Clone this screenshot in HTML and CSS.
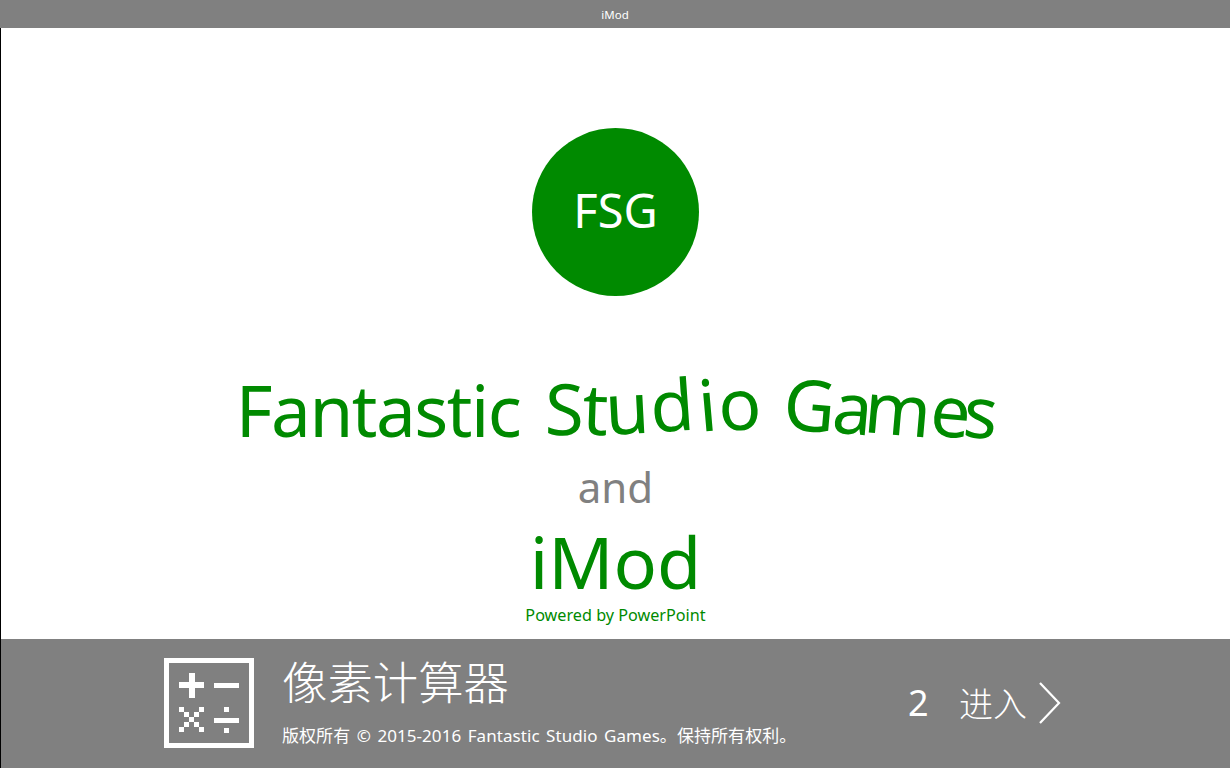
FILE: index.html
```html
<!DOCTYPE html>
<html lang="zh-CN">
<head>
<meta charset="utf-8">
<title>iMod</title>
<link rel="stylesheet" href="styles.css">
</head>
<body>
<div class="app">
  <header class="titlebar">iMod</header>
  <main class="splash">
    <div class="logo">FSG</div>
    <h1 class="studio"><span>Fantastic</span> <span class="wobble"><i class="s">S</i><i class="t">t</i><i class="u">u</i><i class="d">d</i><i class="i">i</i><i class="o">o</i></span> <span class="wobble games"><i class="g">G</i><i class="a">a</i><i class="m">m</i><i class="e">e</i><i class="z">s</i></span></h1>
    <div class="and">and</div>
    <div class="imod">iMod</div>
    <div class="powered">Powered by PowerPoint</div>
  </main>
  <footer class="tile">
    <svg class="calc" width="90" height="90" viewBox="0 0 90 90">
      <rect x="2.5" y="2.5" width="85" height="85" fill="none" stroke="#fff" stroke-width="5"/>
      <path fill="#fff" d="M15 24h10v-9h6v9h9v6h-9v10h-6v-10h-10z"/>
      <rect x="50" y="25" width="25" height="5" fill="#fff"/>
      <path fill="#fff" d="M15 49h5v5h-5zM35 49h5v5h-5zM20 54h5v5h-5zM30 54h5v5h-5zM25 59h5v5h-5zM20 64h5v5h-5zM30 64h5v5h-5zM15 69h5v5h-5zM35 69h5v5h-5z"/>
      <path fill="#fff" d="M60 49h5v5h-5zM50 60h25v5h-25zM60 70h5v5h-5z"/>
    </svg>
    <div class="info">
      <div class="name">像素计算器</div>
      <div class="copy">版权所有 © 2015-2016 Fantastic Studio Games。保持所有权利。</div>
    </div>
    <div class="enter">
      <span class="count">2</span>
      <span class="go">进入</span>
      <svg class="chev" width="22" height="42" viewBox="0 0 22 42"><path d="M1 1l19 20L1 41" fill="none" stroke="#fff" stroke-width="2.2"/></svg>
    </div>
  </footer>
</div>
</body>
</html>
```
FILE: styles.css
```css
* { box-sizing: border-box; }
html, body { margin: 0; padding: 0; height: 100%; background: #fff; overflow: hidden; }
body { font-family: "Noto Sans", "Open Sans", "Noto Sans CJK SC", sans-serif; }
.app { width: 1230px; height: 768px; display: flex; flex-direction: column; border-left: 1px solid #000; background: #fff; }
.titlebar { height: 28px; flex: none; background: #808080; color: #fff; font-size: 11.5px; line-height: 30px; text-align: center; margin-left: -1px; }
.splash { flex: 1; display: flex; flex-direction: column; align-items: center; padding-top: 100px; color: #008a00; min-height: 0; }
.logo { width: 167px; height: 168px; flex: none; border-radius: 50%; background: #008a00; color: #fff; font-size: 47px; line-height: 164px; text-align: center; }
.studio { margin: 68px 12px 0 0; font-weight: 400; font-size: 71px; letter-spacing: -1.5px; line-height: 92px; white-space: nowrap; height: 92px; }
.wobble i { display: inline-block; font-style: normal; }
.s { transform: translate(8px, -2px) rotate(1deg); }
.t { transform: translate(7.6px, -2px) rotate(2deg); }
.u { transform: translate(6px, -3px) rotate(-3deg); }
.d { transform: translate(9px, -6px) rotate(-4deg); }
.i { transform: translate(15px, -6px) rotate(-5deg); }
.o { transform: translate(18px, -7px) rotate(-3deg); }
.g { transform: translate(25px, -6px) rotate(5deg); }
.a { transform: translate(24px, -3px) rotate(5deg); }
.m { transform: translate(18px, -2px) rotate(5deg); }
.e { transform: translate(19px, 0) rotate(5deg); }
.z { transform: translate(13px, 1px) rotate(5deg); }
.and { color: #808080; font-size: 42px; line-height: 52px; margin-top: 5px; }
.imod { font-size: 72px; line-height: 72px; margin-top: 12px; }
.powered { font-size: 16.2px; line-height: 22px; margin-top: 7px; }
.tile { height: 129px; flex: none; background: #808080; color: #fff; display: flex; align-items: flex-start; padding: 19px 0 0 163px; }
.calc { flex: none; display: block; }
.info { width: 620px; margin-left: 28px; }
.name { font-family: "Noto Sans CJK SC", sans-serif; font-weight: 300; font-size: 45.4px; line-height: 50px; margin-top: -3px; }
.copy { font-size: 17px; word-spacing: 2px; letter-spacing: 0.06px; line-height: 22px; margin-top: 20px; white-space: nowrap; }
.enter { display: flex; align-items: center; height: 90px; margin-left: 6px; }
.count { font-size: 36px; line-height: 48px; width: 51px; }
.go { font-family: "Noto Sans CJK SC", sans-serif; font-weight: 300; font-size: 34px; line-height: 46px; width: 80px; }
.chev { flex: none; }
```
